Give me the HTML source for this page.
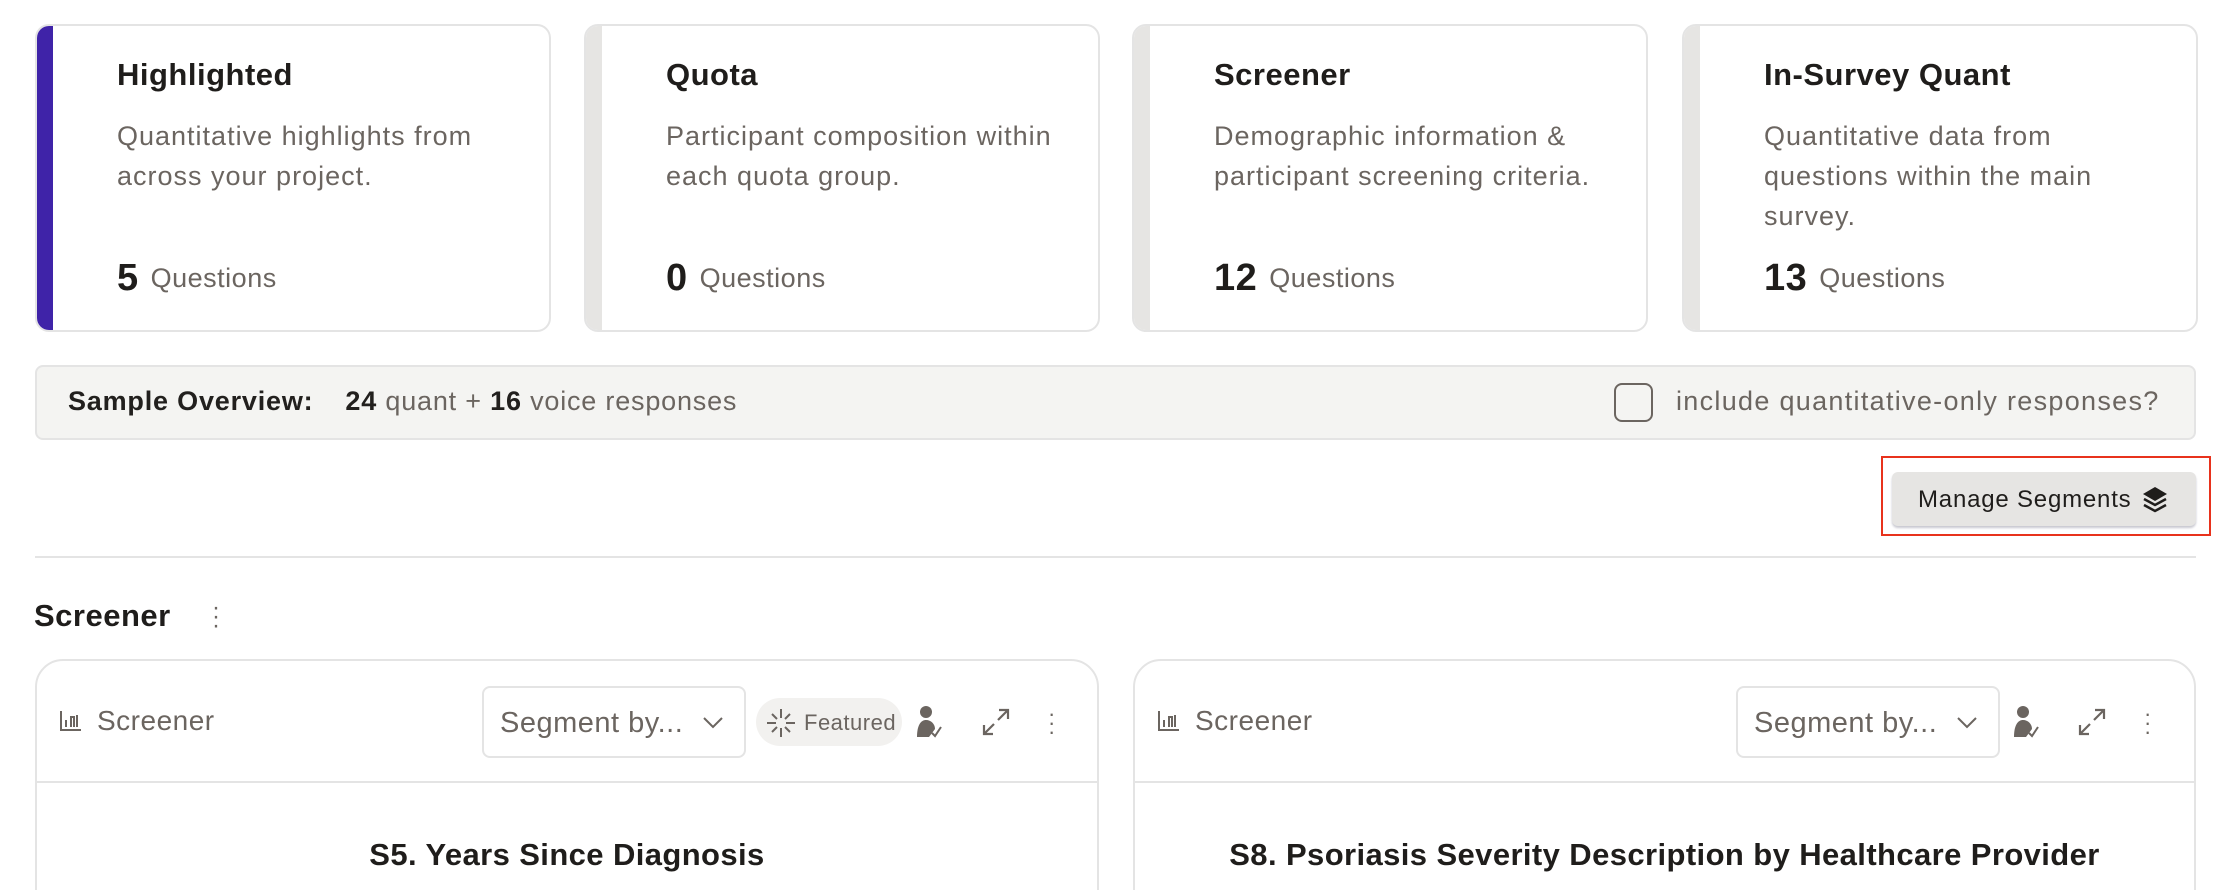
<!DOCTYPE html>
<html style="overflow:hidden;height:890px"><head><meta charset="utf-8"><style>
*{box-sizing:border-box;margin:0;padding:0}
body{width:2222px;height:890px;overflow:hidden;background:#fff;font-family:"Liberation Sans",sans-serif;color:#22201e;position:relative;letter-spacing:0.5px}
.card{position:absolute;top:24px;width:516px;height:308px;border:2px solid #e4e4e4;border-radius:14px;overflow:hidden;background:#fff}
.card .bar{position:absolute;left:0;top:0;bottom:0;width:16px;background:#e6e5e3}
.card.hl .bar{background:#3f23a8}
.card h3{position:absolute;left:80px;top:31px;font-size:31px;font-weight:bold;color:#1f1d1b}
.card p{position:absolute;left:80px;top:90px;width:405px;font-size:27px;line-height:40px;color:#6b6560;letter-spacing:1px}
.card .q{position:absolute;left:80px;top:231px;font-size:27px;color:#6b6560}
.card .q b{font-size:38px;color:#1f1d1b;margin-right:12px;vertical-align:-3px}
.abs{position:absolute}
.gray{color:#6b6560}
.panel{position:absolute;top:659px;height:260px;border:2px solid #e4e4e4;border-radius:28px;background:#fff}
.ph{position:absolute;left:0;right:0;top:0;height:122px;border-bottom:2px solid #e4e4e4}
.sel{position:absolute;top:25px;width:264px;height:72px;border:2px solid #e4e4e4;border-radius:8px;font-size:29px;color:#6b6560;padding:19px 0 0 16px}
.sel svg{position:absolute;right:20px;top:28px}
.ptitle{position:absolute;top:176px;left:0;right:0;text-align:center;font-size:31px;font-weight:bold;color:#1f1d1b;letter-spacing:0.4px}
</style></head><body>
<div class="card hl" style="left:35px"><div class="bar"></div><h3>Highlighted</h3><p>Quantitative highlights from across your project.</p><div class="q"><b>5</b>Questions</div></div>
<div class="card" style="left:584px"><div class="bar"></div><h3>Quota</h3><p>Participant composition within each quota group.</p><div class="q"><b>0</b>Questions</div></div>
<div class="card" style="left:1132px"><div class="bar"></div><h3>Screener</h3><p>Demographic information &amp; participant screening criteria.</p><div class="q"><b>12</b>Questions</div></div>
<div class="card" style="left:1682px"><div class="bar"></div><h3>In-Survey Quant</h3><p>Quantitative data from questions within the main survey.</p><div class="q"><b>13</b>Questions</div></div>

<div class="abs" style="left:35px;top:365px;width:2161px;height:75px;background:#f4f4f2;border:2px solid #e4e4e4;border-radius:8px"></div>
<div class="abs" style="left:68px;top:386px;font-size:27px;letter-spacing:0.8px"><b>Sample Overview:</b><span style="margin-left:32px"><b>24</b> <span class="gray">quant +</span> <b>16</b> <span class="gray">voice responses</span></span></div>
<div class="abs" style="left:1614px;top:383px;width:39px;height:39px;border:2px solid #6b6560;border-radius:8px;background:#f4f4f2"></div>
<div class="abs gray" style="left:1676px;top:386px;font-size:27px;letter-spacing:1.3px">include quantitative-only responses?</div>

<div class="abs" style="left:1881px;top:456px;width:330px;height:80px;border:2px solid #e8321c"></div>
<div class="abs" style="left:1892px;top:472px;width:304px;height:54px;background:#e6e5e3;border-radius:6px;box-shadow:0 2px 2px #c8c8d0;font-size:24px;padding:14px 0 0 26px;color:#1f1d1b;letter-spacing:0.8px">Manage Segments
<svg class="abs" style="left:248px;top:13px" width="30" height="30" viewBox="0 0 30 30"><path d="M15 2 L27 9 L15 16 L3 9Z" fill="#1f1d1b"/><path d="M4 14 L15 20 L26 14" stroke="#1f1d1b" stroke-width="2.5" fill="none"/><path d="M4 20 L15 26 L26 20" stroke="#1f1d1b" stroke-width="2.5" fill="none"/></svg></div>

<div class="abs" style="left:35px;top:556px;width:2161px;height:2px;background:#e4e4e4"></div>
<div class="abs" style="left:34px;top:598px;font-size:31px;font-weight:bold;color:#1f1d1b">Screener</div>
<div class="abs gray" style="left:212px;top:603px;font-size:24px;line-height:9px;width:8px;text-align:center">·<br>·<br>·</div>

<div class="panel" style="left:35px;width:1064px"><div class="ph">
<svg class="abs" style="left:22px;top:48px" width="24" height="24" viewBox="0 0 24 24" fill="none" stroke="#6b6560" stroke-width="2"><path d="M2 2V21H22M7 18V11M12 18V8H15V18M18 18V6"/></svg>
<div class="abs gray" style="left:60px;top:44px;font-size:28px">Screener</div>
<div class="sel" style="left:445px">Segment by...<svg width="22" height="14" viewBox="0 0 22 14" fill="none" stroke="#6b6560" stroke-width="2"><path d="M2 2L11 11L20 2"/></svg></div>
<div class="abs" style="left:719px;top:37px;width:146px;height:48px;background:#f2f1ef;border-radius:24px;font-size:22px;color:#6b6560;padding:12px 0 0 48px">Featured
<svg class="abs" style="left:10px;top:10px" width="30" height="30" viewBox="0 0 30 30" stroke="#6b6560" stroke-width="2"><path d="M15 1V10M15 20V29M1 15H10M20 15H29M6 6L11 11M19 19L24 24M24 6L19 11M11 19L6 24"/></svg></div>
<svg class="abs" style="left:878px;top:44px" width="28" height="34" viewBox="0 0 28 34" fill="#6b6560"><circle cx="11" cy="7" r="6"/><path d="M2 32C2 20 6 15 11 15C16 15 20 19 20 24L14 32Z"/><path d="M17 28L20 31L26 22" stroke="#6b6560" stroke-width="2" fill="none"/></svg>
<svg class="abs" style="left:944px;top:46px" width="30" height="30" viewBox="0 0 30 30" fill="none" stroke="#6b6560" stroke-width="2.2"><path d="M18 3H27V12M27 3L17 13M3 18V27H12M3 27L13 17"/></svg>
<div class="abs gray" style="left:1011px;top:48px;font-size:22px;line-height:9px">·<br>·<br>·</div>
</div><div class="ptitle">S5. Years Since Diagnosis</div></div>

<div class="panel" style="left:1133px;width:1063px"><div class="ph">
<svg class="abs" style="left:22px;top:48px" width="24" height="24" viewBox="0 0 24 24" fill="none" stroke="#6b6560" stroke-width="2"><path d="M2 2V21H22M7 18V11M12 18V8H15V18M18 18V6"/></svg>
<div class="abs gray" style="left:60px;top:44px;font-size:28px">Screener</div>
<div class="sel" style="left:601px">Segment by...<svg width="22" height="14" viewBox="0 0 22 14" fill="none" stroke="#6b6560" stroke-width="2"><path d="M2 2L11 11L20 2"/></svg></div>
<svg class="abs" style="left:877px;top:44px" width="28" height="34" viewBox="0 0 28 34" fill="#6b6560"><circle cx="11" cy="7" r="6"/><path d="M2 32C2 20 6 15 11 15C16 15 20 19 20 24L14 32Z"/><path d="M17 28L20 31L26 22" stroke="#6b6560" stroke-width="2" fill="none"/></svg>
<svg class="abs" style="left:942px;top:46px" width="30" height="30" viewBox="0 0 30 30" fill="none" stroke="#6b6560" stroke-width="2.2"><path d="M18 3H27V12M27 3L17 13M3 18V27H12M3 27L13 17"/></svg>
<div class="abs gray" style="left:1009px;top:48px;font-size:22px;line-height:9px">·<br>·<br>·</div>
</div><div class="ptitle">S8. Psoriasis Severity Description by Healthcare Provider</div></div>
</body></html>
